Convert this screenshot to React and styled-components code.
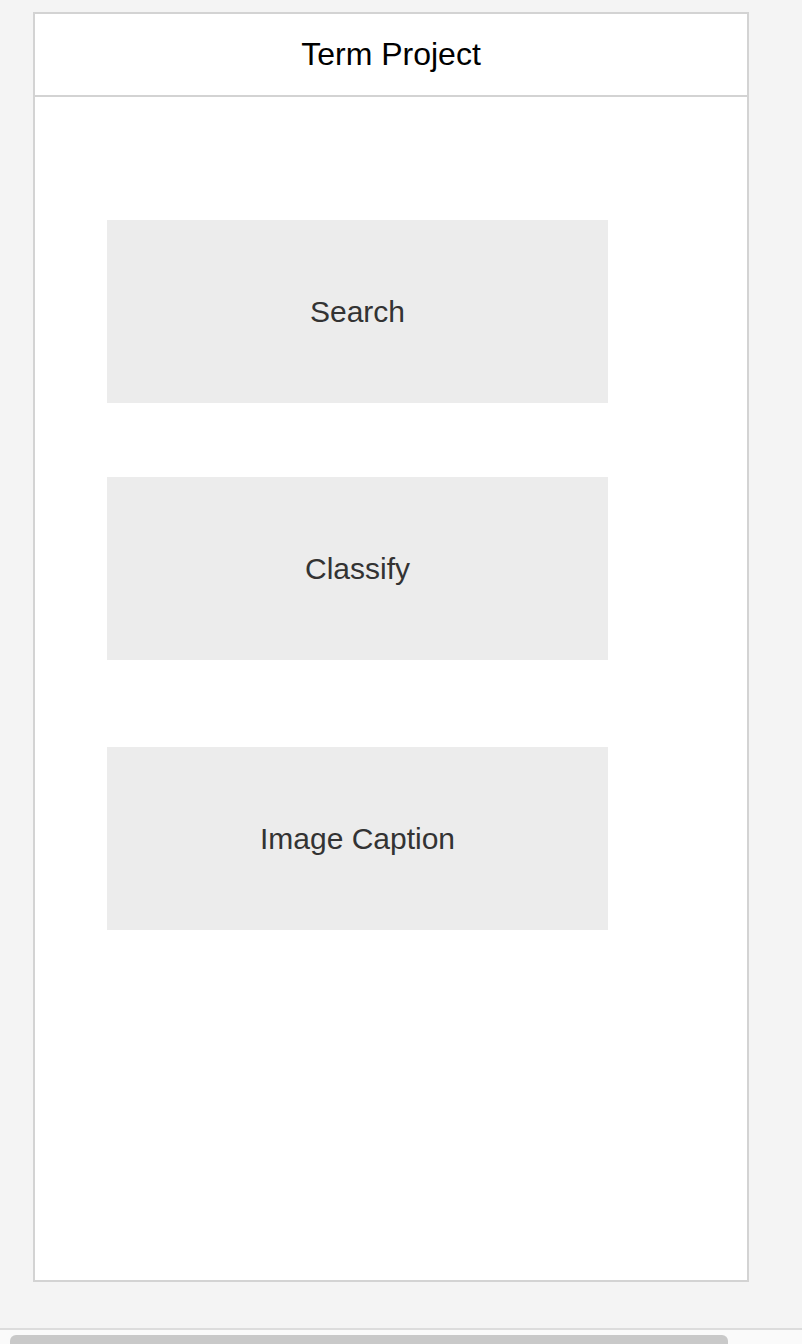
import React from "react";
import styled, { createGlobalStyle } from "styled-components";

const Global = createGlobalStyle`
  html, body { margin: 0; padding: 0; background: #f4f4f4; }
  body { font-family: "Liberation Sans", Arial, Helvetica, sans-serif; overflow: hidden; }
`;

const Page = styled.div`
  width: 802px;
  height: 1344px;
  overflow: hidden;
  display: flex;
  flex-direction: column;
  background: #f4f4f4;
`;

const Frame = styled.div`
  flex-shrink: 0;
  margin: 12px 0 0 33px;
  width: 716px;
  height: 1270px;
  box-sizing: border-box;
  border: 2px solid #d3d3d3;
  background: #fff;
  display: flex;
  flex-direction: column;
`;

const Header = styled.header`
  flex-shrink: 0;
  height: 83px;
  box-sizing: border-box;
  border-bottom: 2px solid #d3d3d3;
  display: flex;
  align-items: center;
  justify-content: center;
  font-size: 32px;
  color: #000;
`;

const Body = styled.div`
  display: flex;
  flex-direction: column;
  padding: 123px 0 0 72px;
`;

const MenuButton = styled.div`
  flex-shrink: 0;
  width: 501px;
  height: 183px;
  margin-top: ${(p) => p.$gap}px;
  background: #ececec;
  color: #333;
  font-size: 30px;
  display: flex;
  align-items: center;
  justify-content: center;
`;

const Footer = styled.div`
  flex-shrink: 0;
  margin-top: 46px;
  border-top: 2px solid #dcdcdc;
  background: #fafafa;
  padding: 5px 0 0 10px;
`;

const Thumb = styled.div`
  width: 718px;
  height: 16px;
  background: #c9c9c9;
  border-radius: 6px;
`;

export default function App() {
  const items = [
    { label: "Search", gap: 0 },
    { label: "Classify", gap: 74 },
    { label: "Image Caption", gap: 87 },
  ];
  return (
    <>
      <Global />
      <Page>
        <Frame>
          <Header>Term Project</Header>
          <Body>
            {items.map((it) => (
              <MenuButton key={it.label} $gap={it.gap}>
                {it.label}
              </MenuButton>
            ))}
          </Body>
        </Frame>
        <Footer>
          <Thumb />
        </Footer>
      </Page>
    </>
  );
}
